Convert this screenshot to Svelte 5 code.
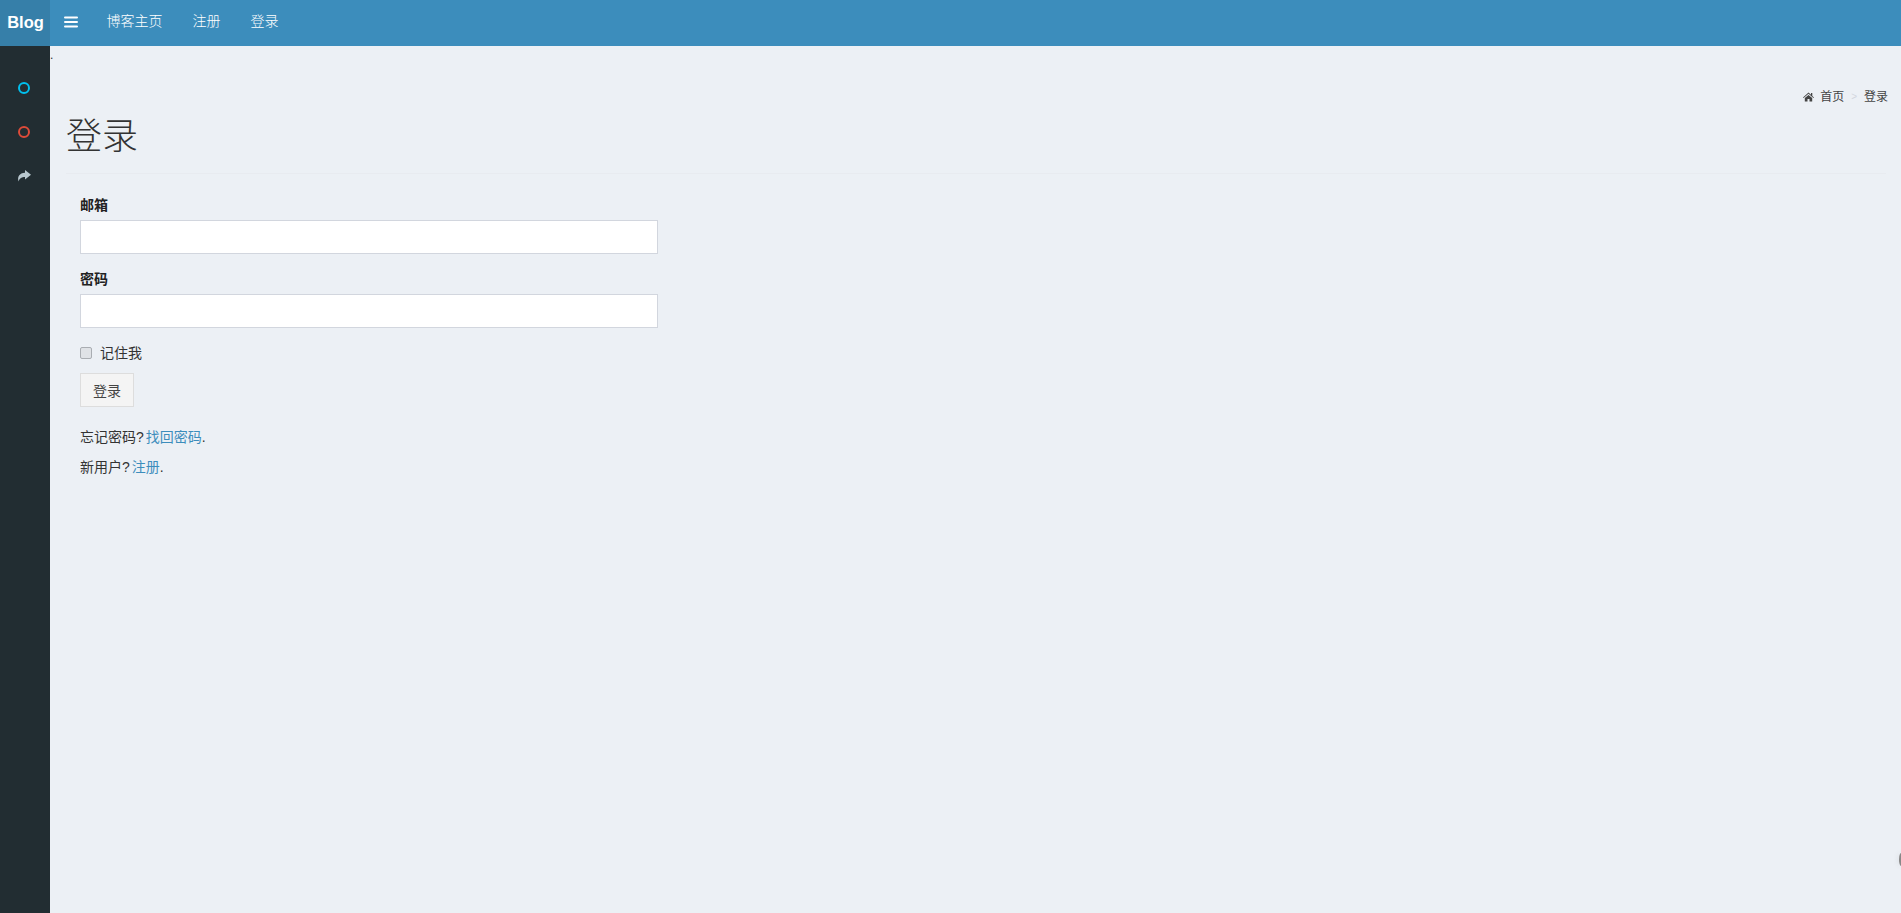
<script lang="ts">
	const navLinks = ['博客主页', '注册', '登录'];
</script>

<div class="wrapper">
	<header class="topbar">
		<a class="logo" href="#home"><b>B</b>log</a>
		<a class="toggle" href="#menu" aria-label="menu">
			<svg width="14" height="12" viewBox="0 0 14 12"><path d="M1 1.5h12M1 6h12M1 10.5h12" stroke="#fff" stroke-width="2" stroke-linecap="round" /></svg>
		</a>
		<nav class="nav">
			{#each navLinks as link}
				<a href="#link">{link}</a>
			{/each}
		</nav>
	</header>

	<div class="body">
		<aside class="sidebar">
			<span class="ring cyan"></span>
			<span class="ring red"></span>
			<svg class="share" width="14" height="12" viewBox="0 0 14 12"><path d="M8 0 L14 4.8 L8 9.6 V7 C5 7 2.6 8 1.6 11.6 C0 7 2.4 3 8 2.8 Z" fill="#b8c7ce" /></svg>
		</aside>

		<main class="content">
			<div class="dot">.</div>
			<section class="page-head">
				<ol class="breadcrumb">
					<li>
						<svg width="11" height="10" viewBox="0 0 11 10"><path d="M5.5 0.5 L8 2.7 V1 H9.3 V3.9 L11 5.4 L10.4 6 L5.5 1.8 L0.6 6 L0 5.4 Z M1.8 6 L5.5 2.9 L9.2 6 V9.6 H6.5 V7 H4.5 V9.6 H1.8 Z" fill="#444" /></svg>
						首页
					</li>
					<li class="sep">&gt;</li>
					<li>登录</li>
				</ol>
				<h1>登录</h1>
			</section>
			<hr />

			<form class="login">
				<div class="field">
					<label for="email">邮箱</label>
					<input id="email" type="text" />
				</div>
				<div class="field">
					<label for="password">密码</label>
					<input id="password" type="password" />
				</div>
				<label class="remember"><input type="checkbox" /><span>记住我</span></label>
				<button type="button">登录</button>
				<p class="first">忘记密码? <a href="#reset">找回密码</a>.</p>
				<p>新用户? <a href="#register">注册</a>.</p>
			</form>
		</main>
	</div>
	<div class="edge"></div>
</div>

<style>
	:global(body) {
		margin: 0;
		background: #ecf0f5;
		font-family: "Liberation Sans", "Noto Sans CJK SC", sans-serif;
		font-size: 14px;
		color: #333;
	}

	.wrapper {
		display: flex;
		flex-direction: column;
		height: 913px;
		overflow: hidden;
	}

	.topbar {
		display: flex;
		align-items: center;
		height: 46px;
		background: #3c8dbc;
		flex: none;
	}

	.logo {
		display: flex;
		align-items: center;
		justify-content: center;
		width: 49px;
		height: 44px;
		padding: 0 0 2px 1px;
		background: #367fa9;
		color: #fff;
		font-size: 16.5px;
		font-weight: 700;
		text-decoration: none;
	}

	.toggle {
		display: flex;
		align-items: center;
		margin-left: 14px;
		margin-bottom: 2px;
	}

	.nav {
		display: flex;
		gap: 30px;
		margin-left: 28.5px;
		margin-bottom: 6px;
	}

	.nav a {
		color: #fff;
		font-weight: 300;
		text-decoration: none;
	}

	.body {
		display: flex;
		flex: 1;
		min-height: 0;
	}

	.sidebar {
		display: flex;
		flex-direction: column;
		align-items: center;
		width: 50px;
		flex: none;
		padding-top: 36px;
		padding-right: 2px;
		box-sizing: border-box;
		background: #222d32;
	}

	.ring {
		width: 8px;
		height: 8px;
		border-width: 2.5px;
		border-style: solid;
		border-radius: 50%;
		margin-bottom: 32px;
	}

	.cyan {
		border-color: #00c0ef;
	}

	.red {
		border-color: #dd4b39;
	}

	.content {
		flex: 1;
		min-width: 0;
	}

	.dot {
		height: 18px;
		line-height: 18px;
		font-size: 12px;
		color: #333;
	}

	.page-head {
		padding: 0 13px 0 16px;
	}

	.breadcrumb {
		display: flex;
		justify-content: flex-end;
		align-items: center;
		gap: 6px;
		list-style: none;
		margin: 0;
		padding: 24px 0 0;
		height: 18px;
		font-size: 12px;
		line-height: 18px;
		color: #444;
	}

	.breadcrumb li {
		display: flex;
		align-items: center;
		gap: 6px;
	}

	.sep {
		color: #d2d6de;
		font-size: 10px;
		padding: 0 1px;
	}

	h1 {
		margin: 0;
		padding-top: 9px;
		height: 43px;
		font-size: 36px;
		line-height: 43px;
		font-weight: 300;
		color: #333;
	}

	hr {
		height: 0;
		margin: 15px 15px 0 16px;
		border: 0;
		border-top: 1px solid #e8ebf0;
	}

	.login {
		width: 578px;
		padding: 21px 0 0 30px;
		box-sizing: content-box;
	}

	.field {
		margin-bottom: 15px;
	}

	.field label {
		display: block;
		margin-bottom: 5px;
		font-weight: 700;
		line-height: 20px;
		color: #222;
	}

	.field input {
		display: block;
		width: 100%;
		height: 34px;
		box-sizing: border-box;
		padding: 6px 12px;
		background: #fff;
		border: 1px solid #d2d6de;
		outline: none;
	}

	.remember {
		display: flex;
		align-items: center;
		gap: 8px;
		height: 20px;
		margin-bottom: 10px;
		line-height: 20px;
	}

	.remember input {
		appearance: none;
		width: 12px;
		height: 12px;
		margin: 0;
		background: #dfe2e6;
		border: 1px solid #a9adb2;
		border-radius: 2px;
	}

	button {
		display: block;
		width: 54px;
		height: 34px;
		padding: 0;
		background: #f4f4f4;
		border: 1px solid #ddd;
		font: inherit;
		color: #444;
	}

	p {
		margin: 0 0 10px;
		line-height: 20px;
		word-spacing: -2px;
	}

	.first {
		margin-top: 20px;
	}

	p a {
		color: #3c8dbc;
		text-decoration: none;
	}

	.edge {
		position: fixed;
		right: -2px;
		top: 853px;
		width: 4px;
		height: 13px;
		border-radius: 50%;
		background: #888;
		box-shadow: 0 0 6px rgba(0, 0, 0, 0.1);
	}
</style>
